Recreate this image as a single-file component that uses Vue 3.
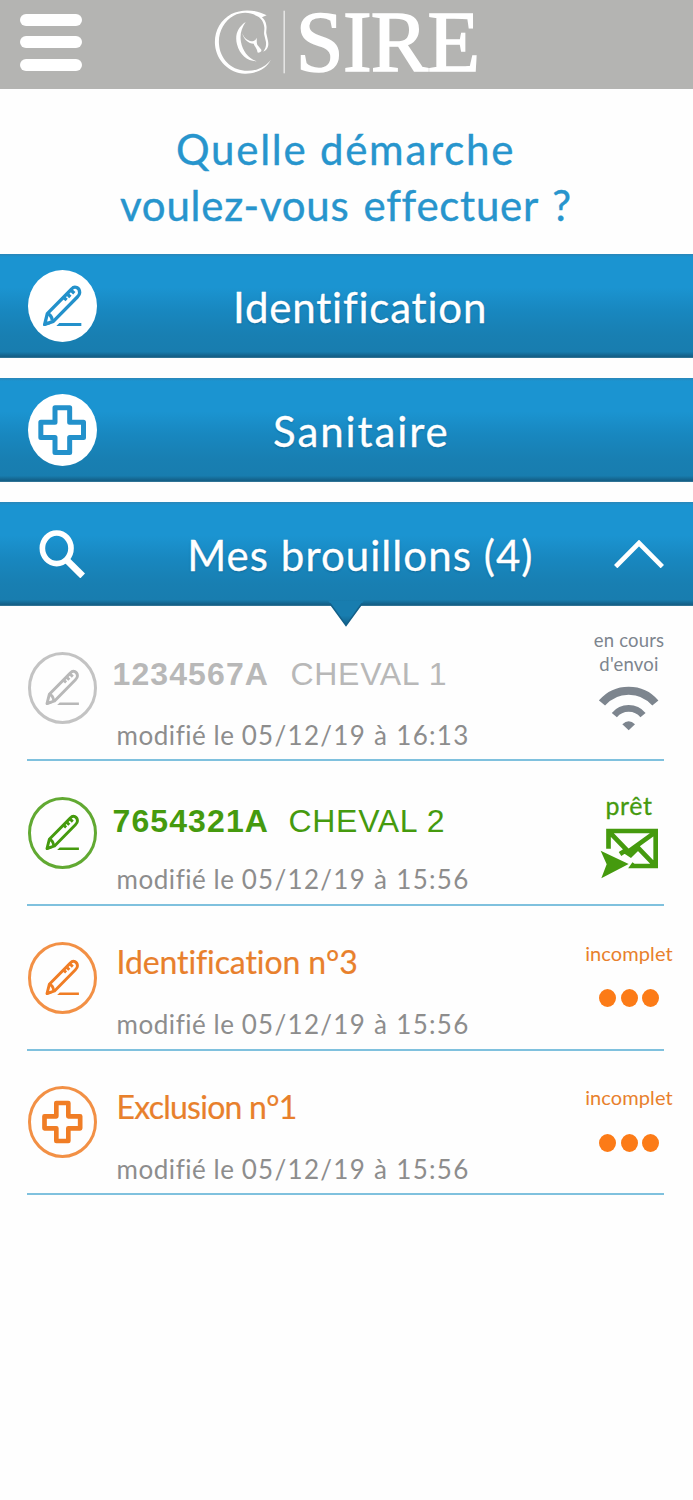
<script setup>
const actions = [
  { label: 'Identification', icon: 'pencil', name: 'identification' },
  { label: 'Sanitaire', icon: 'cross', name: 'sanitaire' }
]

const drafts = [
  { number: '1234567A', horse: 'CHEVAL 1', date: '05/12/19 à 16:13', icon: 'pencil', state: 'sending' },
  { number: '7654321A', horse: 'CHEVAL 2', date: '05/12/19 à 15:56', icon: 'pencil', state: 'ready' },
  { title: 'Identification n°3', kind: 'ident', date: '05/12/19 à 15:56', icon: 'pencil', state: 'incomplete' },
  { title: 'Exclusion n°1', kind: 'excl', date: '05/12/19 à 15:56', icon: 'cross', state: 'incomplete' }
]
</script>

<template>
  <div class="screen">
    <header class="topbar">
      <div class="burger"><span></span><span></span><span></span></div>
      <div class="brand">
        <svg class="horse" viewBox="40 25 220 200" aria-hidden="true">
          <path d="M198 47 C168 30 125 26 92 43 C58 62 40 97 43 135 C47 183 86 220 132 222 C166 223 197 207 211 180 C192 204 163 216 132 213 C91 210 58 178 55 133 C52 98 70 64 99 48 C125 35 151 38 170 50 C183 56 190 70 191 83 C192 92 189 97 191 106 L196 127 C197 138 195 145 188 156 L196 151 C204 142 204 133 202 123 L197 101 C196 94 199 87 197 77 C196 66 190 58 184 53 Z" />
          <path d="M135 67 C111 83 102 106 109 134 C117 166 140 185 168 185 C143 175 126 155 121 127 C117 105 122 87 135 67 Z" />
          <path d="M124 98 C128 113 138 122 151 125 C161 125 165 122 168 114 C169 127 167 132 173 139 L182 150 C184 156 177 161 170 158 C172 151 162 141 159 132 C144 132 129 121 124 98 Z" />
          <rect x="249" y="33" width="3" height="188" />
        </svg>
        <span class="brand-name">SIRE</span>
      </div>
    </header>

    <h1 class="question">
      <span class="q-first">Quelle démarche</span>
      <span class="q-second">voulez-vous effectuer ?</span>
    </h1>

    <main>
      <nav class="actions">
        <button v-for="a in actions" :key="a.name" class="bar">
          <svg class="badge" viewBox="0 0 207 216" aria-hidden="true">
            <ellipse cx="103.500" cy="108" rx="103.500" ry="108" fill="#fff" />
            <g v-if="a.icon === 'pencil'" class="ink pencil">
              <path d="M50 163 L58 131 L131 57 C140 46 155 53 155 68 C155 74 151 78 148 81 L76 154 Z" />
              <path d="M58 131 C66 133 71 139 73 151 M118 72 L127 81 M129 61 L139 70 M108 83 L116 90" />
              <path class="solid" d="M46 168 L51 148 L66 163 Z M94 159 H160 V168 H85 Z" />
            </g>
            <path v-else class="ink cross" d="M81 41 H125 V84.500 H166.500 V130.500 H125 V175.500 H81 V130.500 H38.500 V84.500 H81 Z" />
          </svg>
          <span :class="['bar-label', a.name]">{{ a.label }}</span>
        </button>
        <button class="bar open">
          <svg class="search" viewBox="0 0 140 145" aria-hidden="true">
            <ellipse cx="53" cy="55" rx="43" ry="46" />
            <path class="handle" d="M84 91 L131 138" />
          </svg>
          <span class="bar-label brouillons">Mes brouillons (4)</span>
          <svg class="chevron" viewBox="0 0 150 84" aria-hidden="true"><path d="M5 80 L75 9 L145 80" /></svg>
          <svg class="pointer" viewBox="0 0 36 26" aria-hidden="true">
            <defs>
              <linearGradient id="tip" x1="0" y1="0" x2="0" y2="1">
                <stop offset="0" stop-color="#187daf" />
                <stop offset="0.600" stop-color="#187daf" />
                <stop offset="1" stop-color="#125f88" />
              </linearGradient>
            </defs>
            <path d="M0 0 H36 L18 25 Z" fill="url(#tip)" />
            <path d="M2 3 L18 25 L34 3" fill="none" stroke="#125f88" stroke-width="1.500" />
          </svg>
        </button>
      </nav>

      <ul class="drafts">
        <li v-for="(d, i) in drafts" :key="i" :class="['draft', d.state]">
          <svg class="badge" viewBox="0 0 207 216" aria-hidden="true">
            <ellipse class="ring" cx="103.500" cy="108" rx="99" ry="103.500" />
            <g v-if="d.icon === 'pencil'" class="ink pencil small">
              <path d="M50 163 L58 131 L131 57 C140 46 155 53 155 68 C155 74 151 78 148 81 L76 154 Z" />
              <path d="M58 131 C66 133 71 139 73 151 M118 72 L127 81 M129 61 L139 70 M108 83 L116 90" />
              <path class="solid" d="M46 168 L51 148 L66 163 Z M94 159 H160 V168 H85 Z" />
            </g>
            <path v-else class="ink cross" d="M85 51 H121 V91 H156.500 V127 H121 V165 H85 V127 H49.500 V91 H85 Z" />
          </svg>
          <div class="info">
            <div v-if="d.number" class="name coded"><b>{{ d.number }}</b><span>{{ d.horse }}</span></div>
            <div v-else :class="['name', d.kind]">{{ d.title }}</div>
            <div class="date">modifié le <span class="stamp">{{ d.date }}</span></div>
          </div>
          <div class="status">
            <template v-if="d.state === 'sending'">
              <div class="status-text"><span>en cours</span><span>d'envoi</span></div>
              <svg class="wifi" viewBox="178 186 179 134" aria-hidden="true">
                <path d="M187 237 A105 105 0 0 1 347 237" fill="none" stroke="currentColor" stroke-width="24" />
                <path d="M224 273 A56 56 0 0 1 310 273" fill="none" stroke="currentColor" stroke-width="20" />
                <path d="M248 301 Q267 282 286 301 L267 319 Z" fill="currentColor" />
              </svg>
            </template>
            <template v-else-if="d.state === 'ready'">
              <div class="status-text">prêt</div>
              <svg class="mail" viewBox="180 610 176 152" aria-hidden="true">
                <path d="M205.500 672 V619 H347 V724 H278 L283 717 M210 624 L265 681 L344 624 M293 668 L345 722 M240 688 L254 679 L272 691 L290 673" fill="none" stroke="currentColor" stroke-width="14" />
                <path d="M182 678 L266 718 L184 761 L200 719 Z" fill="currentColor" />
              </svg>
            </template>
            <template v-else>
              <div class="status-text">incomplet</div>
              <div class="dots"><i></i><i></i><i></i></div>
            </template>
          </div>
        </li>
      </ul>
    </main>
  </div>
</template>

<style>
body { margin: 0; background: #fefefe; }
</style>

<style scoped>
.screen {
  width: 693px;
  height: 1500px;
  background: #fefefe;
  font-family: Lato, "Open Sans", sans-serif;
}
.topbar {
  display: flex;
  align-items: flex-start;
  box-sizing: border-box;
  height: 89px;
  padding-left: 20px;
  background: #b4b4b2;
}
.burger { display: grid; gap: 10.5px; width: 61.5px; padding-top: 13.5px; }
.burger span { height: 12px; border-radius: 6px; background: #fff; }
.brand { display: flex; align-items: flex-start; margin-left: 132px; color: #fff; }
.horse { width: 73.3px; height: 66.7px; margin-top: 8.3px; fill: #fff; }
.brand-name {
  margin-left: 9px;
  font: 86px/84px "Liberation Serif", serif;
  letter-spacing: -0.7px;
  -webkit-text-stroke: 1.6px #fff;
}
.question {
  display: flex;
  flex-direction: column;
  box-sizing: border-box;
  height: 165px;
  margin: 0;
  padding-top: 32px;
  color: #2795cd;
  font-size: 42px;
  font-weight: 400;
  line-height: 56px;
  white-space: nowrap;
  -webkit-text-stroke: 0.4px #2795cd;
}
.q-first { margin-left: 176px; letter-spacing: 1.75px; }
.q-second { margin-left: 120px; letter-spacing: 0.75px; word-spacing: 2.5px; }
.actions { display: grid; gap: 20px; }
.bar {
  position: relative;
  display: flex;
  align-items: center;
  width: 100%;
  height: 104px;
  padding: 0 0 0 28px;
  border: 0;
  background: linear-gradient(#2a86b8 0, #1b94d1 3px, #1b94d1 32%, #1887bf 55%, #187fb2 78%, #187daf 94%, #135f87 98.5%, #3c7c9c 100%);
  color: #fff;
  font: 400 42px/56px Lato, "Open Sans", sans-serif;
  text-align: left;
  white-space: nowrap;
}
.badge { flex: none; width: 69px; height: 72px; }
.ink { fill: none; stroke: #2391cb; stroke-width: 10; stroke-linejoin: round; }
.ink .solid { fill: #2391cb; stroke: none; }
.cross { stroke-width: 15; }
.bar-label { padding-top: 2px; -webkit-text-stroke: 0.3px #fff; text-shadow: 0 1px 2px rgba(0, 60, 100, 0.4); }
.identification { margin-left: 136px; letter-spacing: 0.8px; }
.sanitaire { margin-left: 176px; letter-spacing: 1.9px; }
.brouillons { width: 360px; margin-left: 101.5px; letter-spacing: 1.05px; }
.search { width: 46.7px; height: 48.3px; margin-left: 11px; fill: none; stroke: #fff; stroke-width: 17; }
.search .handle { stroke-width: 20; }
.chevron { width: 50px; height: 28px; margin-left: 66.5px; fill: none; stroke: #fff; stroke-width: 14; }
.pointer { position: absolute; left: 327.5px; top: 98px; width: 36px; height: 27px; }
.drafts { margin: 10.7px 29px 0 27px; padding: 0; list-style: none; }
.draft {
  display: flex;
  align-items: flex-start;
  box-sizing: border-box;
  height: 144.67px;
  border-bottom: 2px solid #7fc1de;
}
.draft .badge { margin: 35.5px 0 0 0.5px; }
.ring { fill: none; stroke: currentColor; stroke-width: 9; opacity: 0.85; }
.draft .ink { stroke: currentColor; }
.draft .ink .solid { fill: currentColor; }
.draft .cross { stroke-width: 14; }
.small { transform: translate(13.5px, 13px) scale(0.87); }
.sending { color: #b8b8b8; }
.ready { color: #459a0e; }
.incomplete { color: #e8802c; }
.incomplete .badge { color: #f07d25; }
.info { flex: none; width: 455px; padding-top: 36px; white-space: nowrap; }
.name { height: 40px; margin-left: 20px; font-size: 32px; line-height: 40px; -webkit-text-stroke: 0.2px currentColor; }
.coded { margin-left: 16px; font-family: "Liberation Sans", Arial, sans-serif; -webkit-text-stroke: 0; letter-spacing: 0.7px; }
.sending .coded { line-height: 43px; }
.ready .coded { line-height: 48px; }
.coded b { display: inline-block; width: 178px; letter-spacing: 1.1px; }
.ready .coded b { width: 176px; }
.ident { letter-spacing: -0.1px; }
.excl { letter-spacing: -0.75px; }
.date { margin: 25px 0 0 20px; color: #8d8d8d; font-size: 26px; line-height: 34px; letter-spacing: 0.55px; }
.stamp { letter-spacing: 1.3px; }
.status {
  display: flex;
  flex: none;
  flex-direction: column;
  align-items: center;
  width: 100px;
  margin-left: 27.5px;
}
.status-text { display: flex; flex-direction: column; align-items: center; white-space: nowrap; }
.sending .status { color: #7d858e; }
.sending .status-text { padding-top: 11px; font-size: 18.5px; line-height: 24.5px; letter-spacing: 0.2px; }
.wifi { width: 59.7px; height: 44.7px; margin-top: 9.5px; }
.ready .status-text { padding-top: 27.5px; font-size: 25px; line-height: 32px; letter-spacing: 0.6px; -webkit-text-stroke: 0.3px currentColor; }
.mail { width: 58.7px; height: 50.7px; margin-top: 7px; }
.incomplete .status-text { padding-top: 33.5px; font-size: 20px; line-height: 26px; letter-spacing: 0.1px; }
.dots { display: flex; gap: 4.5px; margin-top: 23.5px; }
.dots i { width: 17px; height: 18px; border-radius: 50%; background: #fc7b17; }
</style>
